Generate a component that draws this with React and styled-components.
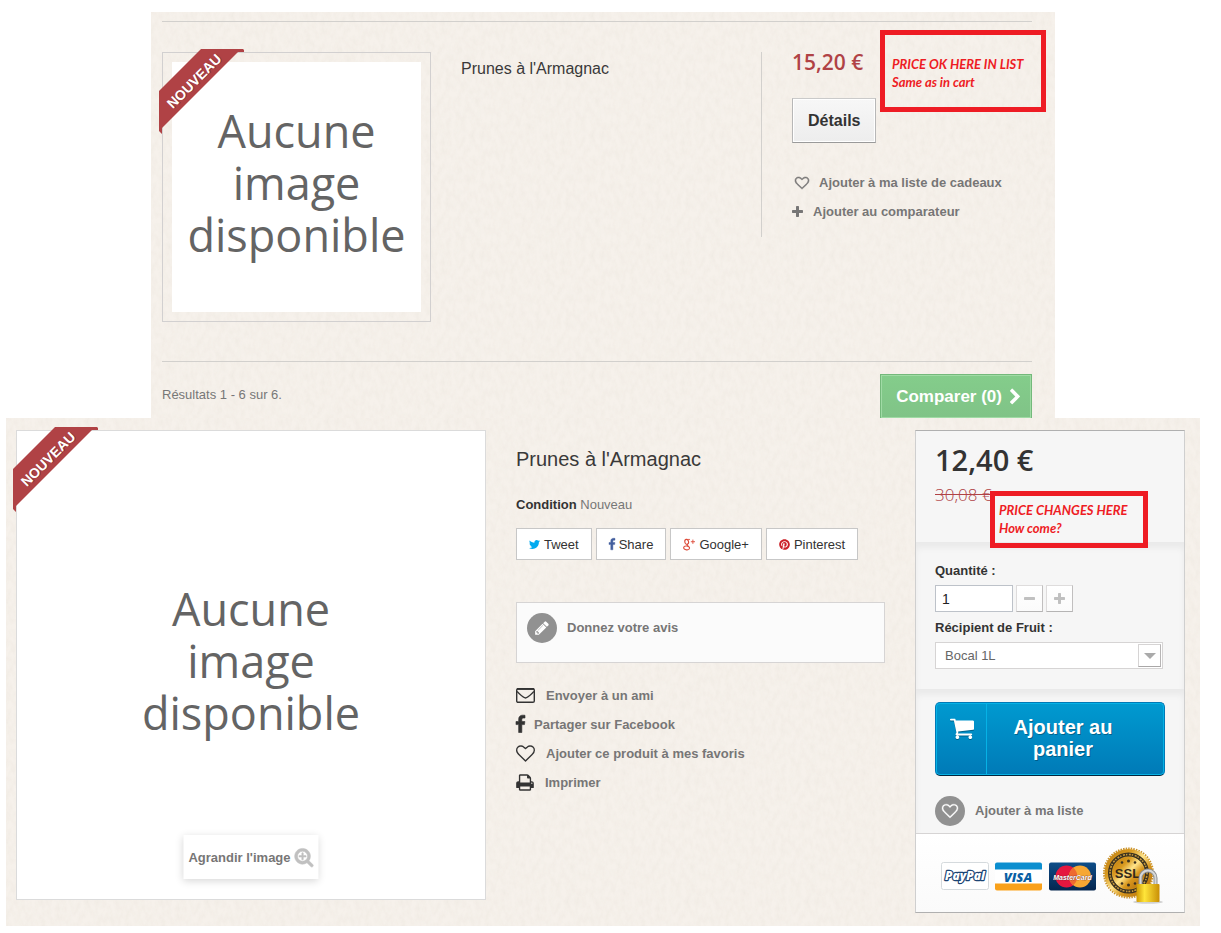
import React from 'react';
import styled, { createGlobalStyle, css } from 'styled-components';
import { FaPinterest } from 'react-icons/fa';

const sans = '"Liberation Sans", Arial, sans-serif';
const open = '"Open Sans", "Noto Sans", sans-serif';

const paperSvg = encodeURIComponent(
  `<svg xmlns="http://www.w3.org/2000/svg" width="120" height="120"><filter id="n" x="0" y="0" width="100%" height="100%"><feTurbulence type="fractalNoise" baseFrequency="0.2 0.12" numOctaves="3" seed="7" stitchTiles="stitch"/><feColorMatrix values="0 0 0 0 0.68  0 0 0 0 0.64  0 0 0 0 0.56  0.3 0 0 0 -0.1"/></filter><rect width="120" height="120" filter="url(#n)"/></svg>`
);

const GlobalStyle = createGlobalStyle`
  *, *::before, *::after { box-sizing: border-box; }
  body {
    margin: 0;
    background: #fff;
    color: #777;
    font: 13px/18px ${sans};
  }
  h1, h2, p, ul { margin: 0; padding: 0; font-weight: normal; }
  ul { list-style: none; }
  button, input, select { font-family: inherit; margin: 0; border-radius: 0; }
  button { cursor: pointer; }
`;

const paper = css`
  background: #f6f1eb url("data:image/svg+xml,${paperSvg}");
`;

const Page = styled.main`
  padding: 12px 21px 7px 6px;
`;

/* ---------- icons ---------- */

const shapes = {
  heart: [0, 1792, 'M1664 596q0-81-21.5-143t-55-98.5-81.5-59.5-94-31-98-8-112 25.5-110.5 64-86.5 72-60 61.5q-18 22-49 22t-49-22q-24-28-60-61.5t-86.5-72-110.5-64-112-25.5-98 8-94 31-81.5 59.5-55 98.5-21.5 143q0 168 187 355l581 560 580-559q188-188 188-356zm128 0q0 221-229 450l-623 600q-18 18-44 18t-44-18l-624-602q-10-8-27.5-26t-55.5-65.5-68-97.5-53.5-121-23.5-138q0-220 127-344t351-124q62 0 126.5 21.5t120 58 95.5 68.5 76 68q36-36 76-68t95.5-68.5 120-58 126.5-21.5q224 0 351 124t127 344z'],
  plus: [192, 1408, 'M1600 736v192q0 40-28 68t-68 28h-416v416q0 40-28 68t-68 28h-192q-40 0-68-28t-28-68v-416h-416q-40 0-68-28t-28-68v-192q0-40 28-68t68-28h416v-416q0-40 28-68t68-28h192q40 0 68 28t28 68v416h416q40 0 68 28t28 68z'],
  minus: [192, 1408, 'M1600 736v192q0 40-28 68t-68 28h-1216q-40 0-68-28t-28-68v-192q0-40 28-68t68-28h1216q40 0 68 28t28 68z'],
  twitter: [108, 1576, 'M1684 408q-67 98-162 167 1 14 1 42 0 130-38 259.5t-115.5 248.5-184.5 210.5-258 146-323 54.5q-271 0-496-145 35 4 78 4 225 0 401-138-105-2-188-64.5t-114-159.5q33 5 61 5 43 0 85-11-112-23-185.5-111.5t-73.5-205.5v-4q68 38 146 41-66-44-105-115t-39-154q0-88 44-163 121 149 294.5 238.5t371.5 99.5q-8-38-8-74 0-134 94.5-228.5t228.5-94.5q140 0 236 102 109-21 205-78-37 115-142 178 93-10 186-50z'],
  facebook: [479, 864, 'M1343 12v264h-157q-86 0-116 36t-30 108v189h293l-39 296h-254v759h-306v-759h-255v-296h255v-218q0-186 104-288.5t277-102.5q147 0 228 12z'],
  print: [64, 1664, 'M448 1536h896v-256h-896v256zm0-640h896v-384h-160q-40 0-68-28t-28-68v-160h-640v640zm1152 64q0-26-19-45t-45-19-45 19-19 45 19 45 45 19 45-19 19-45zm128 0v416q0 13-9.5 22.5t-22.5 9.5h-224v160q0 40-28 68t-68 28h-960q-40 0-68-28t-28-68v-160h-224q-13 0-22.5-9.5t-9.5-22.5v-416q0-79 56.5-135.5t135.5-56.5h64v-544q0-40 28-68t68-28h672q40 0 88 20t76 48l152 152q28 28 48 76t20 88v256h64q79 0 135.5 56.5t56.5 135.5z'],
  cart: [64, 1664, 'M704 1536q0 52-38 90t-90 38-90-38-38-90 38-90 90-38 90 38 38 90zm896 0q0 52-38 90t-90 38-90-38-38-90 38-90 90-38 90 38 38 90zm128-1088v512q0 24-16.5 42.5t-40.5 21.5l-1044 122q13 60 13 70 0 16-24 64h920q26 0 45 19t19 45-19 45-45 19h-1024q-26 0-45-19t-19-45q0-11 8-31.5t16-36 21.5-40 15.5-29.5l-177-823h-204q-26 0-45-19t-19-45 19-45 45-19h256q16 0 28.5 6.5t19.5 15.5 13 24.5 8 26 5.5 29.5 4.5 26h1201q26 0 45 19t19 45z'],
  pencil: [128, 1536, 'M491 1536l91-91-235-235-91 91v107h128v128h107zm523-928q0-22-22-22-10 0-17 7l-542 542q-7 7-7 17 0 22 22 22 10 0 17-7l542-542q7-7 7-17zm-54-192l416 416-832 832h-416v-416zm683 96q0 53-37 90l-166 166-416-416 166-165q36-38 90-38 53 0 91 38l235 234q37 39 37 91z'],
  zoom: [64, 1664, 'M1088 800v64q0 13-9.5 22.5t-22.5 9.5h-224v224q0 13-9.5 22.5t-22.5 9.5h-64q-13 0-22.5-9.5t-9.5-22.5v-224h-224q-13 0-22.5-9.5t-9.5-22.5v-64q0-13 9.5-22.5t22.5-9.5h224v-224q0-13 9.5-22.5t22.5-9.5h64q13 0 22.5 9.5t9.5 22.5v224h224q13 0 22.5 9.5t9.5 22.5zm128 32q0-185-131.5-316.5t-316.5-131.5-316.5 131.5-131.5 316.5 131.5 316.5 316.5 131.5 316.5-131.5 131.5-316.5zm512 832q0 53-37.5 90.5t-90.5 37.5q-54 0-90-38l-343-342q-179 124-399 124-143 0-273.5-55.5t-225-150-150-225-55.5-273.5 55.5-273.5 150-225 225-150 273.5-55.5 273.5 55.5 225 150 150 225 55.5 273.5q0 220-124 399l343 343q37 37 37 90z'],
  chevron: [346, 1036, 'M1363 877l-742 742q-19 19-45 19t-45-19l-166-166q-19-19-19-45t19-45l531-531-531-531q-19-19-19-45t19-45l166-166q19-19 45-19t45 19l742 742q19 19 19 45t-19 45z'],
};

const Glyph = styled.svg`
  display: block;
  flex: none;
  overflow: visible;
  color: ${(p) => p.$color || 'inherit'};
`;

function Icon({ name, size, color, bold = 0 }) {
  const [x, w, d] = shapes[name];
  return (
    <Glyph viewBox={`${x} 0 ${w} 1792`} height={size} width={Math.round((w * size) / 1792)} $color={color} aria-hidden="true">
      <path fill="currentColor" stroke="currentColor" strokeWidth={bold} d={d} />
    </Glyph>
  );
}

const EnvelopeIcon = () => (
  <Glyph viewBox="0 0 19 19" width="19" height="19" fill="none" stroke="#333" aria-hidden="true">
    <rect x="0.7" y="2.7" width="17.6" height="13.6" rx="1.4" strokeWidth="1.4" />
    <path d="M1 3h17" strokeWidth="1.8" />
    <path d="M1 5.6C5 9.2 7.6 12 9.5 12s4.500-2.800 8.500-6.400" strokeWidth="1.3" />
  </Glyph>
);

const GooglePlusIcon = () => (
  <Glyph viewBox="0 0 13 13" width="12" height="13" fill="none" stroke="#dd4b39" aria-hidden="true">
    <ellipse cx="4" cy="3.600" rx="2" ry="2.700" strokeWidth="1.2" transform="rotate(-14 4 3.600)" />
    <path d="M3.600 1h4" strokeWidth="0.9" />
    <path d="M5.200 6c-1.600 1.100-.6 1.500.6 2.400" strokeWidth="1.1" />
    <ellipse cx="3.900" cy="10.200" rx="3.200" ry="2.100" strokeWidth="1.2" transform="rotate(6 4 10)" />
    <path d="M8.500 3.500h4.500M10.700 1.200v4.600" strokeWidth="1" />
  </Glyph>
);

/* ---------- shared pieces ---------- */

const TextLink = styled.a`
  display: flex;
  align-items: center;
  gap: 10px;
  color: #777676;
  font-weight: bold;
  text-decoration: none;
`;

const Round = styled.span`
  display: flex;
  flex: none;
  align-items: center;
  justify-content: center;
  width: 30px;
  height: 30px;
  border-radius: 50%;
  background: #919191;
  color: #fff;
`;

const Ribbon = styled.span`
  position: absolute;
  left: -4px;
  top: -4px;
  display: grid;
  place-items: center;
  width: 85px;
  height: 85px;
  padding: 0 20px 22px 0;
  background: #b04245;
  clip-path: polygon(42px 0, 84px 0, 85px 1px, 85px 3px, 79px 3px, 3px 79px, 3px 85px, 0 82px, 0 42px);

  span {
    transform: rotate(-45deg);
    color: #fff;
    font-size: 14px;
    font-weight: bold;
    text-shadow: 1px 1px rgba(0, 0, 0, 0.24);
  }
`;

const Missing = styled.div`
  display: flex;
  align-items: center;
  justify-content: center;
  width: 100%;
  height: 100%;
  padding-bottom: 8px;
  background: #fff;
  color: #646464;
  font: 45px/52px ${open};
  text-align: center;

  span { width: 230px; }
`;

const Note = styled.aside`
  position: absolute;
  z-index: 2;
  border: 5px solid #ee1c24;
  color: #ee1c24;
  font: italic bold 13px/18px Lato, ${sans};
  white-space: nowrap;
`;

const ListNote = styled(Note)`
  left: 118px;
  top: -22px;
  width: 166px;
  height: 82px;
  padding: 20px 7px;
`;

const ProductNote = styled(Note)`
  left: 74px;
  top: 60px;
  width: 158px;
  height: 57px;
  padding: 5px 4px;
`;

/* ---------- product list ---------- */

const Catalog = styled.section`
  ${paper}
  margin: 0 145px;
  padding: 9px 23px 0 11px;
`;

const ListRow = styled.article`
  display: flex;
  align-items: flex-start;
  padding: 30px 0 39px;
  border: solid #d2d0cd;
  border-width: 1px 0;
`;

const Thumb = styled.div`
  position: relative;
  flex: none;
  width: 269px;
  height: 270px;
  padding: 9px;
  border: 1px solid #d2d0d0;
`;

const ListName = styled.h2`
  flex: 1;
  padding: 5px 30px 0;
  color: #3a3939;
  font-size: 16px;
  line-height: 23px;
`;

const ListSide = styled.div`
  position: relative;
  flex: none;
  width: 271px;
  height: 185px;
  padding-left: 30px;
  border-left: 1px solid #d2d0cd;
`;

const ListPrice = styled.p`
  padding-bottom: 24px;
  color: #b04245;
  font: 600 21px/20px ${open};
`;

const DetailsButton = styled.button`
  display: block;
  height: 45px;
  margin: 2px 0 25px;
  padding: 0 15px;
  border: 1px solid;
  border-color: #cacaca #b7b7b7 #9a9a9a;
  background: linear-gradient(#f7f7f7, #ededed);
  box-shadow: inset 0 0 0 1px #fff;
  color: #333;
  font-size: 16px;
  font-weight: bold;
`;

const ListLink = styled(TextLink)`
  height: 29px;
  padding-left: ${(p) => (p.$indent ? '3px' : '0')};
`;

const ListFooter = styled.div`
  display: flex;
  align-items: flex-start;
  justify-content: space-between;
  padding-top: 12px;

  p { padding-top: 12px; }
`;

const CompareButton = styled.button`
  display: flex;
  align-items: center;
  gap: 8px;
  height: 44px;
  padding: 0 11px 0 15px;
  border: 1px solid #74b97b;
  border-bottom: 0;
  background: linear-gradient(#84cd8b, #80c387);
  box-shadow: inset 0 0 0 1px #a0dba5;
  color: #fff;
  font-size: 17px;
  font-weight: bold;
`;

/* ---------- product sheet ---------- */

const Product = styled.section`
  ${paper}
  display: grid;
  grid-template-columns: minmax(0, 470fr) minmax(0, 369fr) minmax(0, 270fr);
  gap: 30px;
  align-items: start;
  padding: 12px 15px 13px 10px;
`;

const Photo = styled.div`
  position: relative;
  aspect-ratio: 1;
  border: 1px solid #dbdbdb;
`;

const Enlarge = styled.button`
  position: absolute;
  left: 50%;
  bottom: 20px;
  display: flex;
  align-items: center;
  gap: 4px;
  height: 44px;
  padding: 0 5px;
  transform: translateX(-50%);
  border: 0;
  background: #fff;
  box-shadow: 0 2px 8px rgba(0, 0, 0, 0.16);
  color: #777676;
  font-size: 13px;
  font-weight: bold;
  white-space: nowrap;
`;

const Title = styled.h1`
  padding: 18px 0 26px;
  color: #3a3939;
  font-size: 20px;
  line-height: 22px;
`;

const Condition = styled.p`
  padding-bottom: 14px;
  b { color: #333; }
`;

const Shares = styled.div`
  display: flex;
  gap: 4px;
  padding-bottom: 42px;
`;

const ShareButton = styled.button`
  display: flex;
  align-items: center;
  gap: 4px;
  height: 32px;
  padding: 0 12px;
  border: 1px solid #c7c7c7;
  background: #fff;
  color: #333;
  font-size: 13px;
`;

const Review = styled.div`
  height: 61px;
  margin-bottom: 18px;
  padding: 10px;
  border: 1px solid #d6d4d4;
  background: #fbfbfb;
`;

const ActionLink = styled(TextLink)`
  height: 29px;
  gap: ${(p) => (p.$narrow ? '9px' : '11px')};
`;

const Buy = styled.form`
  position: relative;
  border: 1px solid #cfcfcf;
  border-top-color: #b0b0b0;
  border-bottom-color: #b0b0b0;
  background: #f6f6f6;
`;

const BuyPart = styled.div`
  height: ${(p) => p.$h};
  padding: ${(p) => p.$pad};
  box-shadow: ${(p) => (p.$first ? 'none' : 'inset 0 6px 6px rgba(0, 0, 0, 0.05)')};
`;

const Price = styled.p`
  color: #333;
  font: 600 29px/30px ${open};
`;

const OldPrice = styled.p`
  padding-top: 8px;
  color: #b04245;
  font: 300 17px/23px ${open};
  text-decoration: line-through;
`;

const Label = styled.label`
  display: block;
  padding-bottom: 5px;
  color: #333;
  font-weight: bold;
`;

const QtyRow = styled.div`
  display: flex;
  gap: 3px;
  padding-bottom: 7px;
`;

const QtyInput = styled.input`
  width: 78px;
  height: 27px;
  padding: 0 6px;
  border: 1px solid #bdc2c9;
  background: #fff;
  color: #222;
  font-size: 14px;
`;

const QtyButton = styled.button`
  display: flex;
  align-items: center;
  justify-content: center;
  width: 27px;
  height: 27px;
  padding: 0;
  border: 1px solid;
  border-color: #dedcdc #c1bfbf #b5b4b4 #dedcdc;
  background: linear-gradient(#fff, #fbfbfb);
  color: #c0c0c0;
`;

const SelectBox = styled.div`
  display: flex;
  width: 228px;
  max-width: 100%;
  height: 27px;
  padding: 1px;
  border: 1px solid #d6d4d4;
  background: #fff;

  select {
    flex: 1;
    min-width: 0;
    padding: 0 8px;
    border: 0;
    appearance: none;
    background: transparent;
    color: #666;
    font-size: 13px;
  }

  span {
    display: grid;
    place-items: center;
    width: 23px;
    border: 1px solid;
    border-color: #d6d4d4 #b7b5b5 #a9a7a7 #d6d4d4;
    background: #fff;
  }
`;

const CartButton = styled.button`
  display: flex;
  width: 100%;
  height: 74px;
  margin-bottom: 20px;
  padding: 0;
  border: 1px solid #0079b6;
  border-bottom-color: #012740;
  border-radius: 5px;
  background: linear-gradient(#009ad0, #007ab7);
  box-shadow: inset 0 0 0 1px #06b2e6;
  color: #fff;
  font-size: 20px;
  font-weight: bold;
  line-height: 22px;
  text-shadow: 1px 1px rgba(0, 0, 0, 0.3);
`;

const CartMark = styled.span`
  align-self: stretch;
  width: 51px;
  padding: 12px 0 0 14px;
  border-right: 1px solid #06b2e6;

  svg { filter: drop-shadow(0 1px 0 rgba(0, 0, 0, 0.3)); }
`;

const CartText = styled.span`
  flex: 1;
  padding: 13px 43px 0 18px;
  text-align: center;
`;

const Payments = styled.div`
  display: flex;
  align-items: center;
  gap: 6px;
  height: 79px;
  padding: 6px 0 0 25px;
  border-top: 1px solid #d6d4d4;
  background: linear-gradient(#fff, #fafafa);
`;

const PayPalLogo = () => (
  <Glyph width="48" height="29" viewBox="0 0 48 29" role="img" aria-label="PayPal">
    <rect x=".5" y=".5" width="47" height="27" rx="2" fill="#fff" stroke="#d5dadd" />
    <text x="24" y="18" textAnchor="middle" fontFamily="Open Sans, sans-serif" fontStyle="italic" fontWeight="800" fontSize="12" fill="#fff" stroke="#1c4474" strokeWidth="2.400" strokeLinejoin="round" paintOrder="stroke">PayPal</text>
  </Glyph>
);

const VisaLogo = () => (
  <Glyph width="48" height="29" viewBox="0 0 48 29" role="img" aria-label="Visa">
    <rect width="47" height="28" y=".5" rx="2" fill="#fff" />
    <path d="M0 7.500V2.500Q0 .5 2 .5H45Q47 .5 47 2.500V7.500Z" fill="#0b8ecf" />
    <path d="M0 21.500V26.500Q0 28.500 2 28.500H45Q47 28.500 47 26.500V21.500Z" fill="#f9a11b" />
    <text x="23" y="19.500" textAnchor="middle" fontFamily="Open Sans, sans-serif" fontStyle="italic" fontWeight="800" fontSize="13" fill="#0a5fa5">VISA</text>
  </Glyph>
);

const MasterCardLogo = () => (
  <Glyph width="48" height="29" viewBox="0 0 48 29" role="img" aria-label="MasterCard">
    <defs>
      <linearGradient id="mc" x2="0" y2="1"><stop stopColor="#0d4d88" /><stop offset="1" stopColor="#05264f" /></linearGradient>
    </defs>
    <rect width="47" height="28" y=".5" rx="2" fill="url(#mc)" />
    <circle cx="17.500" cy="14.500" r="11" fill="#e5173f" />
    <circle cx="31" cy="14.500" r="11" fill="#f7a733" />
    <path d="M24.200 5.800a11 11 0 0 1 0 17.400a11 11 0 0 1 0-17.400" fill="#ee6a30" />
    <text x="23.500" y="17.500" textAnchor="middle" fontFamily="Liberation Sans, sans-serif" fontStyle="italic" fontWeight="bold" fontSize="7" fill="#fff" stroke="#5a2430" strokeWidth=".5" paintOrder="stroke">MasterCard</text>
  </Glyph>
);

const SslLogo = () => (
  <Glyph width="58" height="58" viewBox="0 0 58 58" role="img" aria-label="SSL">
    <defs>
      <linearGradient id="gold" x2="1" y2="1">
        <stop stopColor="#b97a10" /><stop offset=".3" stopColor="#d99a20" /><stop offset=".48" stopColor="#ffe48a" /><stop offset=".65" stopColor="#d8961d" /><stop offset="1" stopColor="#a8660a" />
      </linearGradient>
      <linearGradient id="lock"><stop stopColor="#d09a06" /><stop offset=".35" stopColor="#ffe53a" /><stop offset="1" stopColor="#c98f05" /></linearGradient>
    </defs>
    <circle cx="25.500" cy="26" r="24.500" fill="none" stroke="#c9922a" strokeWidth="2" strokeDasharray="1.500 1.100" />
    <circle cx="25.500" cy="26" r="24" fill="url(#gold)" />
    <circle cx="25.500" cy="26" r="18.500" fill="none" stroke="#3a3120" strokeWidth="4" />
    <circle cx="25.500" cy="26" r="18.500" fill="none" stroke="#c79a3c" strokeWidth="1.600" strokeDasharray="1.400 1.600 2 1" />
    <circle cx="25.500" cy="26" r="16" fill="url(#gold)" />
    <g fill="#3a3120">
      <circle cx="19" cy="15.500" r="1.300" /><circle cx="25.500" cy="14" r="1.500" /><circle cx="32" cy="15.500" r="1.300" />
      <circle cx="19" cy="36.500" r="1.300" /><circle cx="25.500" cy="38" r="1.500" /><circle cx="32" cy="36.500" r="1.300" />
    </g>
    <text x="24.500" y="31" textAnchor="middle" fontFamily="Liberation Sans, sans-serif" fontWeight="bold" fontSize="13" fill="#33291a">SSL</text>
    <ellipse cx="45" cy="55" rx="15" ry="1.800" fill="#000" opacity=".16" />
    <path d="M37.500 39v-8a7.500 7.500 0 0 1 15 0v8" fill="none" stroke="#8d8f92" strokeWidth="4" />
    <path d="M37.500 39v-8a7.500 7.500 0 0 1 15 0v8" fill="none" stroke="#d6d8da" strokeWidth="2" />
    <rect x="33.500" y="37" width="23" height="18" rx="1" fill="url(#lock)" />
  </Glyph>
);

const NoImage = () => (
  <Missing><span>Aucune image disponible</span></Missing>
);

const NewFlag = () => (
  <Ribbon><span>NOUVEAU</span></Ribbon>
);

export default function App() {
  return (
    <Page>
      <GlobalStyle />
      <Catalog>
        <ListRow>
          <Thumb>
            <NoImage />
            <NewFlag />
          </Thumb>
          <ListName>Prunes à l'Armagnac</ListName>
          <ListSide>
            <ListPrice>15,20 €</ListPrice>
            <DetailsButton type="button">Détails</DetailsButton>
            <ListLink href="#cadeaux" $indent><Icon name="heart" size={14} bold={70} />Ajouter à ma liste de cadeaux</ListLink>
            <ListLink href="#comparer"><Icon name="plus" size={14} />Ajouter au comparateur</ListLink>
            <ListNote>PRICE OK HERE IN LIST<br />Same as in cart</ListNote>
          </ListSide>
        </ListRow>
        <ListFooter>
          <p>Résultats 1 - 6 sur 6.</p>
          <CompareButton type="button">Comparer (0)<Icon name="chevron" size={18} /></CompareButton>
        </ListFooter>
      </Catalog>

      <Product>
        <Photo>
          <NoImage />
          <NewFlag />
          <Enlarge type="button">Agrandir l'image<Icon name="zoom" size={20} color="#c0c0c0" bold={50} /></Enlarge>
        </Photo>

        <div>
          <Title>Prunes à l'Armagnac</Title>
          <Condition><b>Condition</b> Nouveau</Condition>
          <Shares>
            <ShareButton type="button"><Icon name="twitter" size={13} color="#00aaf0" />Tweet</ShareButton>
            <ShareButton type="button"><Icon name="facebook" size={13} color="#435f9f" bold={60} />Share</ShareButton>
            <ShareButton type="button"><GooglePlusIcon />Google+</ShareButton>
            <ShareButton type="button"><FaPinterest size={11} color="#cb2027" aria-hidden="true" />Pinterest</ShareButton>
          </Shares>
          <Review>
            <TextLink href="#avis"><Round><Icon name="pencil" size={16} /></Round>Donnez votre avis</TextLink>
          </Review>
          <ul>
            <li><ActionLink href="#ami"><EnvelopeIcon />Envoyer à un ami</ActionLink></li>
            <li><ActionLink href="#facebook" $narrow><Icon name="facebook" size={19} color="#333" bold={60} />Partager sur Facebook</ActionLink></li>
            <li><ActionLink href="#favoris"><Icon name="heart" size={19} color="#333" />Ajouter ce produit à mes favoris</ActionLink></li>
            <li><ActionLink href="#imprimer"><Icon name="print" size={19} color="#333" />Imprimer</ActionLink></li>
          </ul>
        </div>

        <Buy onSubmit={(e) => e.preventDefault()}>
          <BuyPart $first $h="111px" $pad="14px 19px 0">
            <Price>12,40 €</Price>
            <OldPrice>30,08 €</OldPrice>
          </BuyPart>
          <ProductNote>PRICE CHANGES HERE<br />How come?</ProductNote>
          <BuyPart $h="147px" $pad="20px 19px 0">
            <Label htmlFor="qty">Quantité :</Label>
            <QtyRow>
              <QtyInput id="qty" type="text" defaultValue="1" />
              <QtyButton type="button" aria-label="Diminuer"><Icon name="minus" size={14} /></QtyButton>
              <QtyButton type="button" aria-label="Augmenter"><Icon name="plus" size={14} /></QtyButton>
            </QtyRow>
            <Label htmlFor="recipient">Récipient de Fruit :</Label>
            <SelectBox>
              <select id="recipient" defaultValue="1l"><option value="1l">Bocal 1L</option></select>
              <span><svg width="12" height="6" viewBox="0 0 12 6" aria-hidden="true"><path d="M0 0h12L6 6z" fill="#aaa" /></svg></span>
            </SelectBox>
          </BuyPart>
          <BuyPart $h="144px" $pad="13px 19px 0">
            <CartButton type="submit">
              <CartMark><Icon name="cart" size={26} /></CartMark>
              <CartText>Ajouter au panier</CartText>
            </CartButton>
            <TextLink href="#liste"><Round><Icon name="heart" size={16} bold={40} /></Round>Ajouter à ma liste</TextLink>
          </BuyPart>
          <Payments>
            <PayPalLogo />
            <VisaLogo />
            <MasterCardLogo />
            <SslLogo />
          </Payments>
        </Buy>
      </Product>
    </Page>
  );
}
